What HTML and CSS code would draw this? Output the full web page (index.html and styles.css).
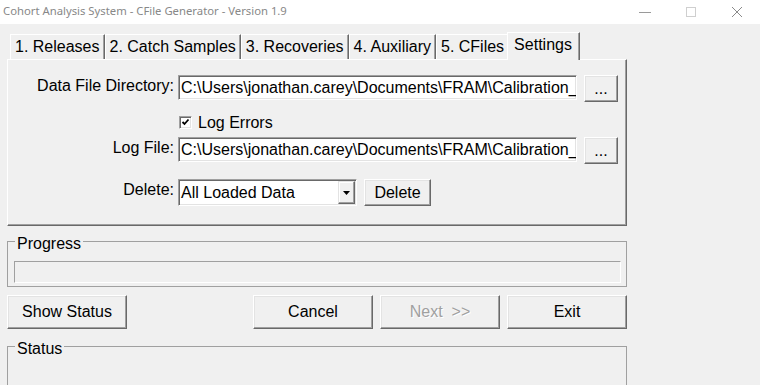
FILE: index.html
```html
<!DOCTYPE html>
<html lang="en">
<head>
  <title>Cohort Analysis System - CFile Generator - Version 1.9</title>
  <meta charset="utf-8">
  <link rel="stylesheet" href="styles.css">
</head>
<body>
  <div class="titlebar">
    <span class="title">Cohort Analysis System - CFile Generator - Version 1.9</span>
    <div class="controls">
      <span class="ctl"><svg width="12" height="12" viewBox="0 0 12 12"><path d="M0 6.5h12" stroke="#9a9a9a" stroke-width="1"/></svg></span>
      <span class="ctl"><svg width="11" height="11" viewBox="0 0 11 11"><rect x="0.5" y="0.5" width="9" height="9" fill="none" stroke="#cfcfcf"/></svg></span>
      <span class="ctl"><svg width="12" height="12" viewBox="0 0 12 12"><path d="M1 1l10 10M11 1L1 11" stroke="#8a8a8a" stroke-width="1"/></svg></span>
    </div>
  </div>

  <div class="window">
    <div class="tabs">
      <div class="tab">1. Releases</div>
      <div class="tab">2. Catch Samples</div>
      <div class="tab">3. Recoveries</div>
      <div class="tab">4. Auxiliary</div>
      <div class="tab">5. CFiles</div>
      <div class="tab active">Settings</div>
    </div>

    <div class="panel">
      <div class="row">
        <label class="lbl">Data File Directory:</label>
        <div class="field"><span class="path">C:\Users\jonathan.carey\Documents\FRAM\Calibration_1</span></div>
        <button class="btn browse">...</button>
      </div>
      <div class="row check-row">
        <span class="checkbox"><svg width="9" height="9" viewBox="0 0 9 9"><path d="M1.5 4l2 2 4-4.5" fill="none" stroke="#000" stroke-width="1.8"/></svg></span>
        <span class="check-text">Log Errors</span>
      </div>
      <div class="row log-row">
        <label class="lbl">Log File:</label>
        <div class="field"><span class="path">C:\Users\jonathan.carey\Documents\FRAM\Calibration_1</span></div>
        <button class="btn browse">...</button>
      </div>
      <div class="row delete-row">
        <label class="lbl">Delete:</label>
        <div class="select">
          <span class="select-text">All Loaded Data</span>
          <span class="select-arrow"><svg width="7" height="4" viewBox="0 0 7 4"><path d="M0 0h7L3.5 4z" fill="#000"/></svg></span>
        </div>
        <button class="btn delete">Delete</button>
      </div>
    </div>

    <fieldset class="group progress">
      <legend>Progress</legend>
      <div class="bar"></div>
    </fieldset>

    <div class="actions">
      <button class="btn action">Show Status</button>
      <button class="btn action push">Cancel</button>
      <button class="btn action disabled">Next&nbsp; &gt;&gt;</button>
      <button class="btn action">Exit</button>
    </div>

    <fieldset class="group status">
      <legend>Status</legend>
    </fieldset>
  </div>
</body>
</html>
```

FILE: styles.css
```css
* {
  box-sizing: border-box;
}
html, body {
  margin: 0;
  height: 100%;
  overflow: hidden;
}
body {
  background-color: #f0f0f0;
  font-family: "Liberation Sans", Arial, sans-serif;
  font-size: 16px;
  color: #000;
}

/* window caption */
.titlebar {
  display: flex;
  height: 24px;
  background-color: #fff;
}
.title {
  flex: 1;
  padding-left: 3px;
  font-family: "Noto Sans", sans-serif;
  font-size: 11.3px;
  line-height: 22px;
  color: #888;
  white-space: nowrap;
}
.controls {
  display: flex;
}
.ctl {
  width: 46px;
  display: flex;
  align-items: center;
  justify-content: center;
}

.window {
  width: 627px;
  padding: 8px 0 0 7px;
}

/* tab strip */
.tabs {
  display: flex;
  align-items: flex-end;
  height: 27px;
  padding-left: 3px;
}
.tab {
  height: 25px;
  padding: 3px 4px 0 4px;
  line-height: 18px;
  white-space: nowrap;
  border-top: 1px solid #fff;
  border-left: 1px solid #fff;
  border-right: 1px solid #696969;
  box-shadow: inset -1px 0 #a0a0a0;
}
.tab.active {
  position: relative;
  z-index: 1;
  height: 28px;
  margin-bottom: -1px;
  margin-left: -2px;
  padding: 3px 7px 0 6px;
  background-color: #f0f0f0;
}

/* settings page */
.panel {
  width: 620px;
  height: 167px;
  padding-top: 15px;
  border: 1px solid;
  border-color: #fff #696969 #696969 #fff;
  box-shadow: inset -1px -1px #a0a0a0;
}
.row {
  display: flex;
  align-items: flex-start;
  height: 27px;
}
.lbl {
  width: 166px;
  margin-right: 4px;
  padding-top: 2px;
  line-height: 18px;
  text-align: right;
  white-space: nowrap;
}
.field, .select, .checkbox {
  background-color: #fff;
  border: 1px solid;
  border-color: #a0a0a0 #fff #fff #a0a0a0;
  box-shadow: inset 1px 1px #696969, inset -1px -1px #e3e3e3;
}
.field {
  width: 399px;
  height: 25px;
  padding: 3px 0 0 2px;
  line-height: 18px;
  white-space: nowrap;
  overflow: hidden;
}
.check-row {
  height: 18px;
  margin-top: 12px;
  padding-left: 171px;
}
.checkbox {
  width: 13px;
  height: 13px;
  margin-top: 2px;
  display: flex;
  align-items: center;
  justify-content: center;
}
.check-text {
  margin-left: 6px;
  line-height: 18px;
}
.log-row {
  margin-top: 5px;
}
.delete-row {
  margin-top: 15px;
}
.select {
  display: flex;
  width: 179px;
  height: 27px;
}
.select-text {
  flex: 1;
  padding: 4px 0 0 2px;
  line-height: 18px;
}
.select-arrow {
  width: 17px;
  height: 23px;
  margin: 1px 1px 0 0;
  display: flex;
  align-items: center;
  justify-content: center;
  background-color: #f0f0f0;
  border: 1px solid;
  border-color: #e3e3e3 #696969 #696969 #e3e3e3;
  box-shadow: inset -1px -1px #a0a0a0, inset 1px 1px #fff;
}

/* raised push buttons */
.btn {
  padding: 0;
  font: inherit;
  color: #000;
  background-color: #f0f0f0;
  border: 1px solid;
  border-color: #fff #696969 #696969 #fff;
  box-shadow: inset -1px -1px #a0a0a0, inset 1px 1px #e3e3e3;
}
.browse {
  width: 34px;
  height: 27px;
  margin-left: 7px;
}
.delete {
  width: 67px;
  height: 27px;
  margin-left: 7px;
}

/* group boxes */
.group {
  width: 620px;
  margin: 4px 0 0 0;
  padding: 0 5px 3px 6px;
  border: 1px solid #a0a0a0;
}
.group legend {
  margin-left: 1px;
  padding: 5px 2px 0 2px;
  line-height: 18px;
}
.bar {
  height: 22px;
  margin-top: 8px;
  border: 1px solid;
  border-color: #a0a0a0 #fff #fff #a0a0a0;
}
.actions {
  display: flex;
  gap: 7px;
  margin-top: 8px;
}
.action {
  width: 120px;
  height: 34px;
}
.push {
  margin-left: auto;
}
.disabled {
  color: #a0a0a0;
  text-shadow: 1px 1px #fff;
}
/* runs on below the window edge */
.status {
  height: 54px;
  margin-top: 6px;
}
```
